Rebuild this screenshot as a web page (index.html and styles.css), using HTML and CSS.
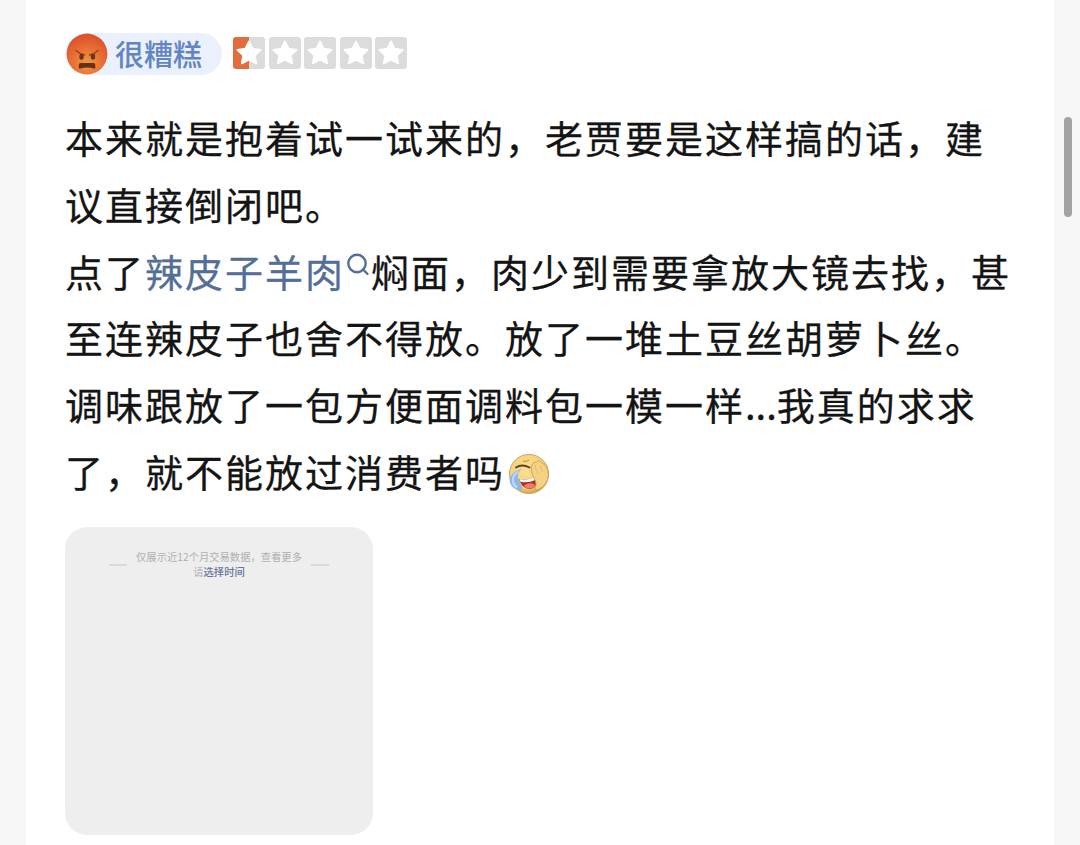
FILE: index.html
```html
<!DOCTYPE html>
<html lang="zh-CN">
<head>
    <meta charset="UTF-8">
    <meta name="viewport" content="width=device-width, initial-scale=1.0">
    <title>评价详情</title>
    <link rel="stylesheet" href="styles.css">
</head>
<body>
    <svg class="defs" width="0" height="0" aria-hidden="true">
        <defs>
            <radialGradient id="angryFace" cx="50%" cy="72%" r="66%">
                <stop offset="0" stop-color="#ee9a40"/>
                <stop offset="0.5" stop-color="#ea7335"/>
                <stop offset="1" stop-color="#dd532c"/>
            </radialGradient>
            <radialGradient id="laughFace" cx="45%" cy="40%" r="60%">
                <stop offset="0" stop-color="#fae093"/>
                <stop offset="0.75" stop-color="#f4d07a"/>
                <stop offset="1" stop-color="#d3a455"/>
            </radialGradient>
            <path id="star" d="M16 4.5l3.6 7.2 8 1.1-5.8 5.6 1.4 8-7.2-3.8-7.2 3.8 1.4-8-5.8-5.6 8-1.1z" fill="#fff" stroke="#fff" stroke-width="1.8" stroke-linejoin="round"/>
        </defs>
    </svg>

    <main class="review">
        <div class="rating">
            <div class="rating-label">
                <svg class="rating-face" viewBox="0 0 42 42">
                    <circle cx="21" cy="21" r="20.4" fill="url(#angryFace)"/>
                    <path d="M10 17.5q3.500 3.500 8.500 4.500M32 17.500q-3.500 3.500-8.500 4.500" fill="none" stroke="#8a4420" stroke-width="1.400" stroke-linecap="round"/>
                    <ellipse cx="15.500" cy="23.800" rx="2.200" ry="3" fill="#6b3519"/>
                    <ellipse cx="27" cy="23.800" rx="2.200" ry="3" fill="#6b3519"/>
                    <path d="M14.500 30h13q1.800 0 1.800 1.800v2.700q0 1.500-1.500 1-6.500-1.800-13.500 0-1.500.5-1.500-1v-2.700q0-1.800 1.700-1.800z" fill="#66301a"/>
                </svg>
                <span>很糟糕</span>
            </div>
            <div class="stars">
                <svg class="star half" viewBox="0 0 32 32"><use href="#star"/></svg>
                <svg class="star" viewBox="0 0 32 32"><use href="#star"/></svg>
                <svg class="star" viewBox="0 0 32 32"><use href="#star"/></svg>
                <svg class="star" viewBox="0 0 32 32"><use href="#star"/></svg>
                <svg class="star" viewBox="0 0 32 32"><use href="#star"/></svg>
            </div>
        </div>

        <div class="review-text">
            <div>本来就是抱着试一试来的，老贾要是这样搞的话，建</div>
            <div>议直接倒闭吧。</div>
            <div>点了<a class="dish">辣皮子羊肉<svg class="search" viewBox="0 0 26 26"><circle cx="12" cy="10.500" r="8.700"/><path d="M18 16.500l4.500 4.500"/></svg></a>焖面，肉少到需要拿放大镜去找，甚</div>
            <div>至连辣皮子也舍不得放。放了一堆土豆丝胡萝卜丝。</div>
            <div>调味跟放了一包方便面调料包一模一样<span class="dots">...</span>我真的求求</div>
            <div>了，就不能放过消费者吗<svg class="laugh" viewBox="0 0 44 44">
                <circle cx="22" cy="22" r="19.600" fill="url(#laughFace)" stroke="#c09350" stroke-width="0.800"/>
                <path d="M9 15.500q6-4 13.500 0" fill="none" stroke="#5f4220" stroke-width="1.900" stroke-linecap="round"/>
                <path d="M16 9q3.500 1.500 6-1" fill="none" stroke="#b3843f" stroke-width="1"/>
                <path d="M12 27q7 2 16-2 3 6 0 9.500-3 3.500-8 2-6-2-8-9.500z" fill="#a8312c"/>
                <path d="M12.500 27q7 2 15.500-2l.8 2.800q-7.800 3.700-15.300 2z" fill="#fff"/>
                <path d="M17 33.500q4-3.500 10-1.500l1 2q-3 3.500-8 2.200-2-.7-3-2.700z" fill="#ee7d6c"/>
                <path d="M15.500 16.500q-5.500 3-4.500 9 1 5 4.500 10-1 4-6 2Q3 35 2.500 28q.5-8 13-11.500z" fill="#8fb6e6"/>
                <path d="M11 19.500q-6 4-5 10 .5 4 4 6" fill="none" stroke="#bcd7f5" stroke-width="2.200"/>
                <path d="M27 26q-4-6-2.500-12 1.500-4.500 5-4 2.500-3 5 .5 5.500 3 6.500 9 1.500 9-5 15-3.500 3-7 3.500-1.500-2 0-5 .5-3-2-7z" fill="#f5d184" stroke="#cfa053" stroke-width="0.900"/>
                <path d="M28 13q.5 5 3 9M33 13q1 4 2.500 7" fill="none" stroke="#dfb567" stroke-width="0.800"/>
            </svg></div>
        </div>

        <div class="photo">
            <span class="photo-line"></span>
            <div class="photo-note">仅展示近12个月交易数据，查看更多<br>请<b>选择时间</b></div>
            <span class="photo-line"></span>
        </div>
    </main>
    <div class="scrollbar"></div>
</body>
</html>
```
FILE: styles.css
```css
* {
    box-sizing: border-box;
}

body {
    margin: 0;
    height: 845px;
    overflow: hidden;
    background-color: #f7f7f7;
    font-family: "Noto Sans CJK SC", sans-serif;
    color: #141414;
}

.defs {
    position: absolute;
}

.review {
    width: 1028px;
    height: 845px;
    margin-left: 26px;
    padding: 33px 0 0 39px;
    background-color: #fff;
}

.rating {
    display: flex;
    align-items: center;
    height: 42px;
}

.rating-label {
    display: flex;
    align-items: center;
    width: 157px;
    height: 42px;
    margin-right: 11px;
    padding-left: 1px;
    border-radius: 21px;
    background-color: #eaf1fd;
    color: #6384c4;
    font-size: 29px;
    font-weight: 500;
    line-height: 40px;
    white-space: nowrap;
}

.rating-label span {
    height: 42px;
}

.rating-face {
    width: 42px;
    height: 42px;
    margin-right: 7px;
}

.stars {
    display: flex;
    gap: 3.600px;
    margin-top: -2px;
}

.star {
    width: 32px;
    height: 32px;
    border-radius: 3px;
    background-color: #dcdcdc;
}

.star.half {
    background: linear-gradient(to right, #e26c3c 50%, #dcdcdc 50%);
}

.review-text {
    margin-top: 29px;
    font-size: 38px;
    letter-spacing: 2px;
    line-height: 66.800px;
    white-space: nowrap;
    -webkit-text-stroke: 0.300px currentColor;
}

.review-text > div {
    height: 66.800px;
}

.dish {
    color: #536f98;
}

.search {
    width: 26px;
    height: 26px;
    vertical-align: 8px;
    fill: none;
    stroke: #536f98;
    stroke-width: 2.400;
    stroke-linecap: round;
}

.dots {
    letter-spacing: 0;
}

.laugh {
    width: 44px;
    height: 44px;
    margin-left: 2px;
    vertical-align: -9px;
}

.photo {
    display: flex;
    justify-content: center;
    align-items: flex-start;
    gap: 9px;
    width: 308px;
    height: 308px;
    margin-top: 22px;
    padding-top: 22px;
    border-radius: 22px;
    background-color: #eee;
}

.photo-note {
    color: #b0b0b0;
    font-size: 10.300px;
    line-height: 15px;
    text-align: center;
    white-space: nowrap;
}

.photo-note b {
    color: #68749a;
    font-weight: 500;
}

.photo-line {
    width: 18px;
    height: 2px;
    margin-top: 15px;
    background-color: #dadada;
}

.scrollbar {
    position: absolute;
    top: 117px;
    right: 8px;
    width: 8px;
    height: 100px;
    border-radius: 4px;
    background-color: #a3a3a3;
}
```
